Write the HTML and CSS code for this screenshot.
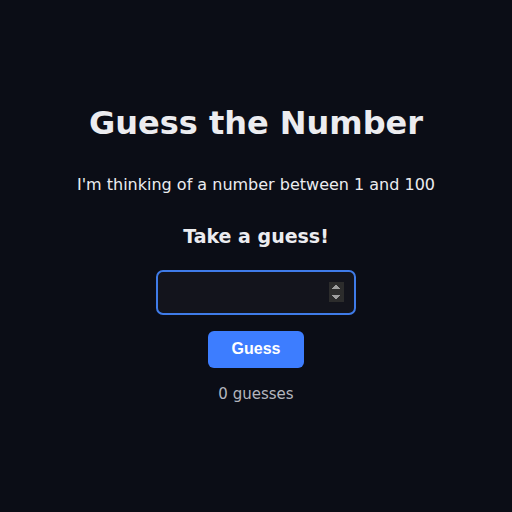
FILE: index.html
```html
<!DOCTYPE html>
<html lang="en">
<head>
<meta charset="UTF-8">
<meta name="viewport" content="width=device-width, initial-scale=1.0">
<title>Guess the Number</title>
<link rel="stylesheet" href="styles.css">
</head>
<body>
<div class="game">
    <h1>Guess the Number</h1>
    <p class="intro">I'm thinking of a number between 1 and 100</p>
    <h2 id="prompt">Take a guess!</h2>
    <input type="number" id="guess" min="1" max="100" autofocus>
    <button id="guess-btn">Guess</button>
    <p id="count">0 guesses</p>
</div>
</body>
</html>
```

FILE: styles.css
```css
* {
    box-sizing: border-box;
    margin: 0;
    padding: 0;
}

body {
    font-family: 'DejaVu Sans', sans-serif;
    background: #0b0d16;
    color: #ececf0;
    min-height: 100vh;
    display: flex;
    align-items: center;
    justify-content: center;
}

.game {
    display: flex;
    flex-direction: column;
    align-items: center;
    text-align: center;
    padding-bottom: 6px;
}

h1 {
    font-size: 32px;
    font-weight: bold;
    margin-bottom: 33px;
}

.intro {
    font-size: 16px;
    margin-bottom: 31px;
}

#prompt {
    font-size: 19px;
    font-weight: bold;
    margin-bottom: 23px;
}

#guess {
    width: 200px;
    height: 45px;
    background: #13141c;
    border: 2px solid #3f7be8;
    border-radius: 7px;
    color: #ececf0;
    caret-color: #ececf0;
    font-size: 18px;
    text-align: center;
    padding: 0 10px;
    outline: none;
    color-scheme: dark;
    margin-bottom: 16px;
}

#guess-btn {
    width: 96px;
    height: 37px;
    background: #3d7dff;
    color: #fff;
    border: none;
    border-radius: 6px;
    font-family: 'Liberation Sans', Arial, sans-serif;
    font-size: 16px;
    font-weight: bold;
    cursor: pointer;
    margin-bottom: 17px;
}

#count {
    font-size: 15px;
    color: #b4b6be;
}
```
